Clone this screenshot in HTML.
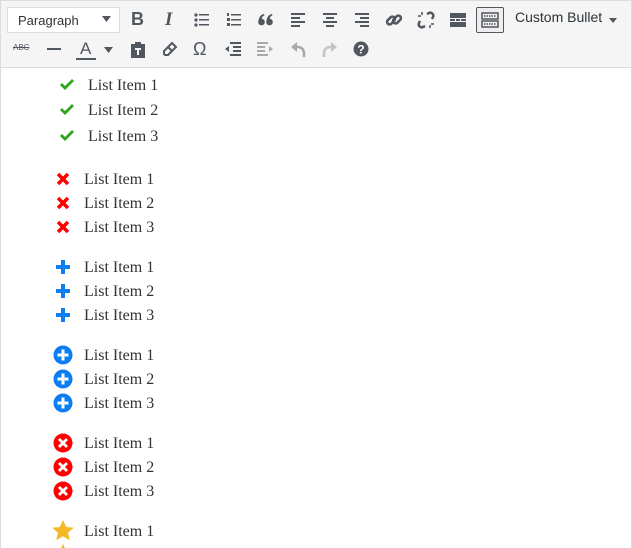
<!DOCTYPE html>
<html><head><meta charset="utf-8"><style>
*{margin:0;padding:0;box-sizing:border-box}
html{width:632px;height:548px;overflow:hidden}
body{width:632px;height:548px;overflow:hidden;background:#fff;position:relative;font-family:"Liberation Sans",sans-serif}
.tb{position:absolute;left:0;top:0;width:632px;height:68px;background:#f5f5f5;border:1px solid #dcdcde;border-bottom:1px solid #dcdcde}
.ed{position:absolute;left:0;top:68px;width:632px;height:480px;border-left:1px solid #dcdcde;border-right:1px solid #dcdcde}
.ic{position:absolute;color:#50575e}
.t{position:absolute;font-family:"Liberation Serif",serif;font-size:16px;color:#333;line-height:24px;white-space:nowrap}
svg{position:absolute}
</style></head><body>
<div class="tb">
<div style="position:absolute;left:6px;top:6px;width:113px;height:26px;background:#fff;border:1px solid #dcdcde;font-size:13px;color:#333;padding:5px 10px">Paragraph</div>
<svg style="left:101px;top:15px" width="9" height="6"><path d="M0 0h9L4.5 6z" fill="#50575e"/></svg>
<div class="ic" style="left:130px;top:8px;font-weight:bold;font-size:18px">B</div>
<div class="ic" style="left:164px;top:8px;font-style:italic;font-family:'Liberation Serif',serif;font-weight:bold;font-size:19px">I</div>
<svg style="left:193px;top:11px" width="16" height="16" fill="#50575e"><circle cx="2" cy="3" r="1.6"/><circle cx="2" cy="8" r="1.6"/><circle cx="2" cy="13" r="1.6"/><rect x="5" y="2" width="10" height="1.5"/><rect x="5" y="7" width="10" height="1.5"/><rect x="5" y="12" width="10" height="1.5"/></svg>
<svg style="left:225px;top:11px" width="16" height="16" fill="#50575e"><rect x="1" y="1" width="2" height="3"/><rect x="1" y="6" width="3" height="3"/><rect x="1" y="11" width="3" height="3"/><rect x="5" y="2" width="10" height="1.5"/><rect x="5" y="7" width="10" height="1.5"/><rect x="5" y="12" width="10" height="1.5"/></svg>
<svg style="left:257px;top:12px" width="16" height="14" fill="#50575e"><circle cx="3.5" cy="9" r="3.3"/><path d="M0.5 9C0.5 4 3 1.5 6 1l.5 1.2C4.5 3 3.5 5 3.5 7z"/><circle cx="11.5" cy="9" r="3.3"/><path d="M8.5 9C8.5 4 11 1.5 14 1l.5 1.2C12.5 3 11.5 5 11.5 7z"/></svg>
<svg style="left:289px;top:11px" width="16" height="16" fill="#50575e"><rect x="1" y="1" width="14" height="2"/><rect x="1" y="5" width="9" height="2"/><rect x="1" y="9" width="14" height="2"/><rect x="1" y="13" width="9" height="2"/></svg>
<svg style="left:321px;top:11px" width="16" height="16" fill="#50575e"><rect x="1" y="1" width="14" height="2"/><rect x="4" y="5" width="8" height="2"/><rect x="1" y="9" width="14" height="2"/><rect x="4" y="13" width="8" height="2"/></svg>
<svg style="left:353px;top:11px" width="16" height="16" fill="#50575e"><rect x="1" y="1" width="14" height="2"/><rect x="6" y="5" width="9" height="2"/><rect x="1" y="9" width="14" height="2"/><rect x="6" y="13" width="9" height="2"/></svg>
<svg style="left:384px;top:10px" width="18" height="18" fill="none" stroke="#50575e" stroke-width="2.5"><rect x="1.5" y="7" width="9" height="5" rx="2.5" transform="rotate(-45 6 9.5)"/><rect x="7.5" y="6" width="9" height="5" rx="2.5" transform="rotate(-45 12 8.5)"/></svg>
<svg style="left:416px;top:10px" width="18" height="18" fill="none" stroke="#50575e" stroke-width="2.5"><path d="M3 10l-1 2a3 3 0 004 4l2-1M15 8l1-2a3 3 0 00-4-4l-2 1" /><path d="M1 5h3M5 1v3M13 17v-3M17 13h-3" stroke-width="1.5"/></svg>
<svg style="left:449px;top:11px" width="16" height="16" fill="#50575e"><rect x="0" y="1" width="16" height="5"/><rect x="0" y="7" width="5" height="2"/><rect x="6" y="7" width="4" height="2"/><rect x="11" y="7" width="5" height="2"/><rect x="0" y="10" width="16" height="5"/></svg>
<div style="position:absolute;left:475px;top:6px;width:28px;height:26px;border:1px solid #50575e;border-radius:2px;background:#eee"></div>
<svg style="left:480px;top:11px" width="18" height="16" fill="none" stroke="#50575e" stroke-width="1.5"><rect x="1" y="1" width="16" height="6"/><rect x="1" y="9" width="16" height="6"/><path d="M3 4h12M3 12h12" stroke-dasharray="1.5 1"/></svg>
<div style="position:absolute;left:514px;top:8px;font-size:14px;color:#2c3338">Custom Bullet</div>
<svg style="left:608px;top:17px" width="8" height="5"><path d="M0 0h8L4 5z" fill="#50575e"/></svg>
<div class="ic" style="left:12px;top:42px;font-size:8px;text-decoration:line-through">ABC</div>
<div style="position:absolute;left:46px;top:47px;width:14px;height:2px;background:#50575e"></div>
<div class="ic" style="left:79px;top:38px;font-size:17px">A</div>
<div style="position:absolute;left:75px;top:57px;width:20px;height:2px;background:#50575e"></div>
<svg style="left:103px;top:46px" width="9" height="6"><path d="M0 0h9L4.5 6z" fill="#50575e"/></svg>
<svg style="left:129px;top:40px" width="16" height="17" fill="#50575e"><path d="M1 3h4V1h6v2h4v14H1z"/><rect x="5" y="7" width="6" height="2" fill="#f5f5f5"/><rect x="7" y="9" width="2" height="5" fill="#f5f5f5"/></svg>
<svg style="left:161px;top:40px" width="16" height="16" fill="none" stroke="#50575e" stroke-width="2"><path d="M10 2l4 4-8 8H3l-1-1v-3z"/><path d="M6 6l4 4"/></svg>
<div class="ic" style="left:192px;top:38px;font-size:18px">&#937;</div>
<svg style="left:224px;top:40px" width="16" height="16" fill="#50575e"><rect x="5" y="1" width="11" height="2"/><rect x="8" y="5" width="8" height="2"/><rect x="8" y="9" width="8" height="2"/><rect x="5" y="13" width="11" height="2"/><path d="M0 8l4-3v6z"/></svg>
<svg style="left:256px;top:40px" width="16" height="16" fill="#a7aaad"><rect x="0" y="1" width="11" height="2"/><rect x="0" y="5" width="8" height="2"/><rect x="0" y="9" width="8" height="2"/><rect x="0" y="13" width="11" height="2"/><path d="M16 8l-4-3v6z"/></svg>
<svg style="left:288px;top:39px" width="18" height="18" fill="none" stroke="#a7aaad" stroke-width="2.5"><path d="M15 17v-4a6 6 0 00-6-6H3"/><path d="M8 2L2 7l6 5z" fill="#a7aaad" stroke="none"/></svg>
<svg style="left:320px;top:39px" width="18" height="18" fill="none" stroke="#c3c4c7" stroke-width="2.5"><path d="M3 17v-4a6 6 0 016-6h6"/><path d="M10 2l6 5-6 5z" fill="#c3c4c7" stroke="none"/></svg>
<svg style="left:352px;top:40px" width="16" height="16"><circle cx="8" cy="8" r="7.5" fill="#50575e"/><text x="8" y="12.5" font-size="12" font-weight="bold" fill="#fff" text-anchor="middle" font-family="Liberation Sans">?</text></svg>
</div>
<div class="ed"></div>

<svg style="left:59px;top:77px" width="16" height="16"><path d="M1 8l2-2 3 3 7-7 2 2-9 9z" fill="#2ea51a"/></svg>
<div class="t" style="left:88px;top:74px">List Item 1</div>
<svg style="left:59px;top:102px" width="16" height="16"><path d="M1 8l2-2 3 3 7-7 2 2-9 9z" fill="#2ea51a"/></svg>
<div class="t" style="left:88px;top:99px">List Item 2</div>
<svg style="left:59px;top:128px" width="16" height="16"><path d="M1 8l2-2 3 3 7-7 2 2-9 9z" fill="#2ea51a"/></svg>
<div class="t" style="left:88px;top:125px">List Item 3</div>

<svg style="left:56px;top:172px" width="14" height="14"><path d="M2 2l10 10M12 2L2 12" stroke="#f00" stroke-width="3.5"/></svg>
<div class="t" style="left:84px;top:168px">List Item 1</div>
<svg style="left:56px;top:196px" width="14" height="14"><path d="M2 2l10 10M12 2L2 12" stroke="#f00" stroke-width="3.5"/></svg>
<div class="t" style="left:84px;top:192px">List Item 2</div>
<svg style="left:56px;top:220px" width="14" height="14"><path d="M2 2l10 10M12 2L2 12" stroke="#f00" stroke-width="3.5"/></svg>
<div class="t" style="left:84px;top:216px">List Item 3</div>

<svg style="left:55px;top:259px" width="16" height="16"><path d="M8 1v14M1 8h14" stroke="#0a7ef2" stroke-width="4"/></svg>
<div class="t" style="left:84px;top:256px">List Item 1</div>
<svg style="left:55px;top:283px" width="16" height="16"><path d="M8 1v14M1 8h14" stroke="#0a7ef2" stroke-width="4"/></svg>
<div class="t" style="left:84px;top:280px">List Item 2</div>
<svg style="left:55px;top:307px" width="16" height="16"><path d="M8 1v14M1 8h14" stroke="#0a7ef2" stroke-width="4"/></svg>
<div class="t" style="left:84px;top:304px">List Item 3</div>

<svg style="left:53px;top:345px" width="20" height="20"><circle cx="10" cy="10" r="9.5" fill="#0a7ef2"/><path d="M10 4.5v11M4.5 10h11" stroke="#fff" stroke-width="3"/></svg>
<div class="t" style="left:84px;top:344px">List Item 1</div>
<svg style="left:53px;top:369px" width="20" height="20"><circle cx="10" cy="10" r="9.5" fill="#0a7ef2"/><path d="M10 4.5v11M4.5 10h11" stroke="#fff" stroke-width="3"/></svg>
<div class="t" style="left:84px;top:368px">List Item 2</div>
<svg style="left:53px;top:393px" width="20" height="20"><circle cx="10" cy="10" r="9.5" fill="#0a7ef2"/><path d="M10 4.5v11M4.5 10h11" stroke="#fff" stroke-width="3"/></svg>
<div class="t" style="left:84px;top:392px">List Item 3</div>

<svg style="left:53px;top:433px" width="20" height="20"><circle cx="10" cy="10" r="9.5" fill="#f00"/><path d="M6 6l8 8M14 6l-8 8" stroke="#fff" stroke-width="2.8"/></svg>
<div class="t" style="left:84px;top:432px">List Item 1</div>
<svg style="left:53px;top:457px" width="20" height="20"><circle cx="10" cy="10" r="9.5" fill="#f00"/><path d="M6 6l8 8M14 6l-8 8" stroke="#fff" stroke-width="2.8"/></svg>
<div class="t" style="left:84px;top:456px">List Item 2</div>
<svg style="left:53px;top:481px" width="20" height="20"><circle cx="10" cy="10" r="9.5" fill="#f00"/><path d="M6 6l8 8M14 6l-8 8" stroke="#fff" stroke-width="2.8"/></svg>
<div class="t" style="left:84px;top:480px">List Item 3</div>

<svg style="left:52px;top:520px" width="22" height="22"><path d="M11 0l3.2 7 7.6.7-5.8 5 1.8 7.5L11 16.3 4.2 20.2 6 12.7 0.2 7.7l7.6-.7z" fill="#f3b927"/></svg>
<div class="t" style="left:84px;top:520px">List Item 1</div>
<svg style="left:52px;top:544px" width="22" height="4"><path d="M11 0l3.2 7 7.6.7-5.8 5 1.8 7.5L11 16.3 4.2 20.2 6 12.7 0.2 7.7l7.6-.7z" fill="#f3b927"/></svg>
</body></html>
